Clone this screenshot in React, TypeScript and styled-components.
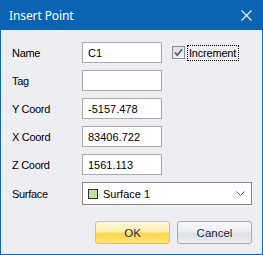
import { createGlobalStyle, styled } from 'styled-components';

const GlobalStyle = createGlobalStyle`
  html, body {
    margin: 0;
    padding: 0;
    background: #eeedf2;
  }
  * {
    box-sizing: border-box;
  }
`;

const Window = styled.div`
  width: 263px;
  height: 255px;
  border: 1px solid #0b63b3;
  border-top: none;
  background: #eeedf2;
  display: flex;
  flex-direction: column;
  font-family: 'Liberation Sans', Arial, sans-serif;
  font-size: 11px;
  color: #000;
`;

const TitleBar = styled.div`
  height: 30px;
  margin: 0 -1px;
  background: #0b63b3;
  color: #fff;
  display: flex;
  align-items: center;
  padding: 0 11px 0 9px;
  font-family: 'Noto Sans', 'Open Sans', sans-serif;
  font-size: 12px;
`;

const Title = styled.div`
  flex: 1;
  letter-spacing: -0.1px;
`;

const Body = styled.div`
  flex: 1;
  padding: 12px 10px 0 11px;
  display: flex;
  flex-direction: column;
`;

const Rows = styled.div`
  display: flex;
  flex-direction: column;
  gap: 7px;
`;

const Row = styled.div<{ $tall?: boolean }>`
  display: flex;
  align-items: center;
  height: ${(p) => (p.$tall ? '23px' : '21px')};
`;

const Label = styled.div`
  width: 70px;
  letter-spacing: -0.3px;
`;

const TextBox = styled.div`
  width: 80px;
  height: 21px;
  background: #fff;
  border: 1px solid #ababab;
  padding-left: 5px;
  display: flex;
  align-items: center;
`;

const CheckWrap = styled.div`
  display: flex;
  align-items: center;
  gap: 2px;
  margin-left: 10px;
`;

const FocusLabel = styled.div`
  border: 1px dotted #000;
  padding: 0 2px 0 1px;
  height: 16px;
  display: flex;
  align-items: center;
  letter-spacing: -0.2px;
`;

const Combo = styled.div`
  width: 170px;
  height: 23px;
  background: #fff;
  border: 1px solid #8a8a8a;
  display: flex;
  align-items: center;
  padding: 0 6px 0 5px;
  gap: 5px;
`;

const Swatch = styled.div`
  width: 10px;
  height: 10px;
  background: #c2e09e;
  border: 1px solid #2e2e2e;
`;

const ComboText = styled.div`
  flex: 1;
`;

const Buttons = styled.div`
  display: flex;
  justify-content: flex-end;
  gap: 7px;
  margin-top: 16px;
`;

const Button = styled.div<{ $primary?: boolean }>`
  width: 75px;
  height: 23px;
  border-radius: 3px;
  display: flex;
  align-items: center;
  justify-content: center;
  font-size: 11.5px;
  color: #1b2a3c;
  border: 1px solid ${(p) => (p.$primary ? '#d9c07c' : '#a9adb3')};
  background: ${(p) =>
    p.$primary
      ? 'linear-gradient(#fff8dc 0%, #ffeeaa 45%, #ffd64a 55%, #ffe27a 100%)'
      : 'linear-gradient(#f7f8fa 0%, #eceef1 45%, #dcdfe4 55%, #eceef1 100%)'};
`;

const CloseIcon = () => (
  <svg width="11" height="11" viewBox="0 0 11 11">
    <path d="M0.5 0.5 L10.5 10.5 M10.5 0.5 L0.5 10.5" stroke="#fff" strokeWidth="1.1" />
  </svg>
);

const CheckIcon = () => (
  <svg width="13" height="13" viewBox="0 0 13 13">
    <defs>
      <linearGradient id="cbg" x1="0" y1="0" x2="1" y2="1">
        <stop offset="0" stopColor="#d6d8dc" />
        <stop offset="1" stopColor="#f7f8fa" />
      </linearGradient>
    </defs>
    <rect x="0.5" y="0.5" width="12" height="12" fill="url(#cbg)" stroke="#8e8f91" />
    <path d="M3 6.5 L5.3 9.2 L10 3.2" fill="none" stroke="#3a5d9c" strokeWidth="1.6" />
  </svg>
);

const Chevron = () => (
  <svg width="9" height="5" viewBox="0 0 9 5">
    <path d="M0.5 0.5 L4.5 4.5 L8.5 0.5" fill="none" stroke="#5c5c5c" strokeWidth="1" />
  </svg>
);

const fields = [
  { label: 'Tag', value: '' },
  { label: 'Y Coord', value: '-5157.478' },
  { label: 'X Coord', value: '83406.722' },
  { label: 'Z Coord', value: '1561.113' },
];

const App = () => {
  return (
    <>
      <GlobalStyle />
      <Window>
        <TitleBar>
          <Title>Insert Point</Title>
          <CloseIcon />
        </TitleBar>
        <Body>
          <Rows>
            <Row>
              <Label>Name</Label>
              <TextBox>C1</TextBox>
              <CheckWrap>
                <CheckIcon />
                <FocusLabel>Increment</FocusLabel>
              </CheckWrap>
            </Row>
            {fields.map((f) => (
              <Row key={f.label}>
                <Label>{f.label}</Label>
                <TextBox>{f.value}</TextBox>
              </Row>
            ))}
            <Row $tall>
              <Label>Surface</Label>
              <Combo>
                <Swatch />
                <ComboText>Surface 1</ComboText>
                <Chevron />
              </Combo>
            </Row>
          </Rows>
          <Buttons>
            <Button $primary>OK</Button>
            <Button>Cancel</Button>
          </Buttons>
        </Body>
      </Window>
    </>
  );
};

export default App;
